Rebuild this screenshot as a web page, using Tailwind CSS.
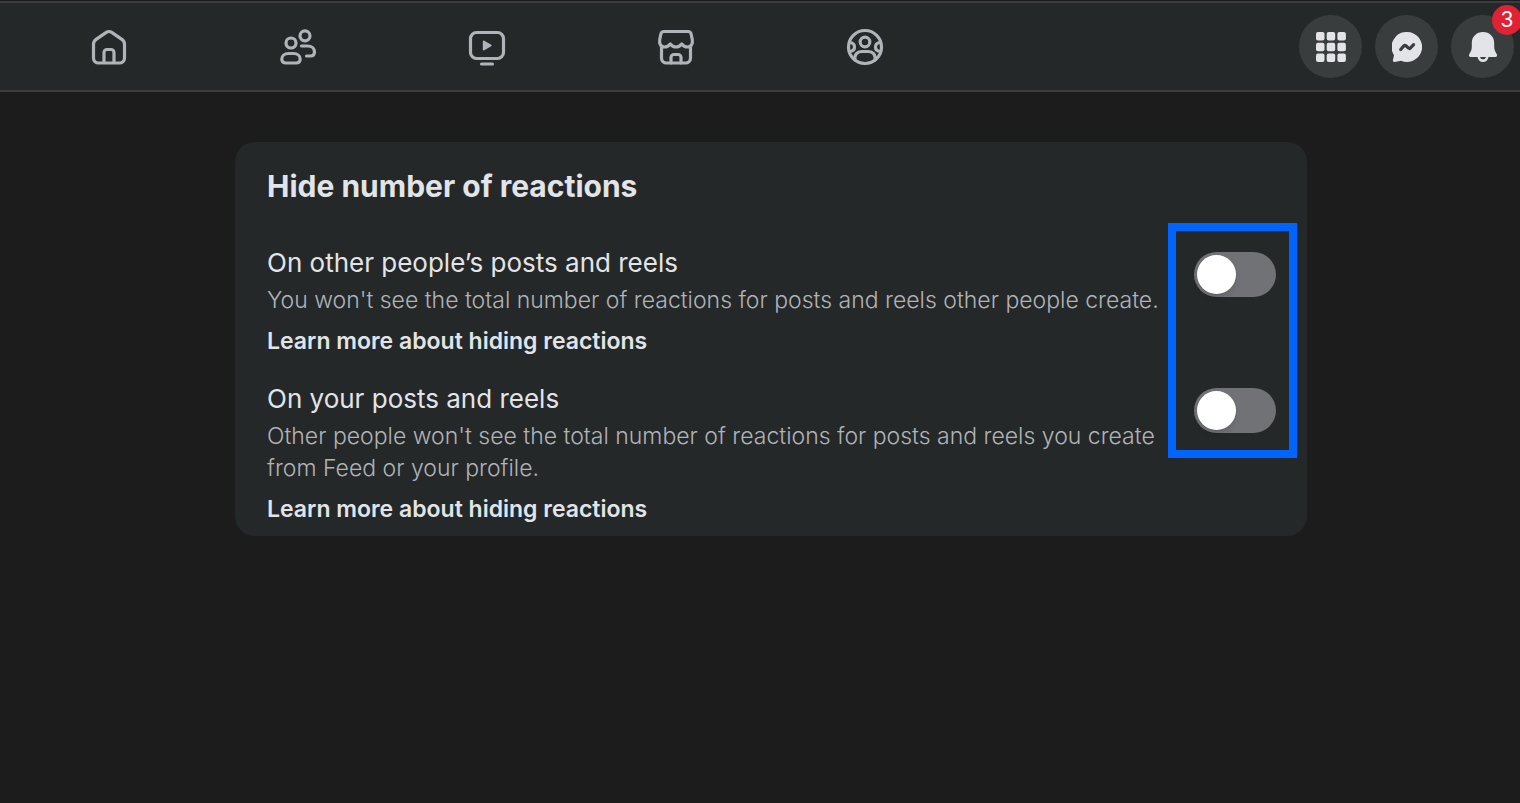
<!DOCTYPE html>
<html lang="en">
<head>
    <meta charset="UTF-8">
    <meta name="viewport" content="width=device-width, initial-scale=1.0">
    <title>Reaction preferences</title>
    <script src="https://cdn.jsdelivr.net/npm/@tailwindcss/browser@4"></script>
</head>
<body class="min-h-screen bg-[#1c1c1d] font-['Inter','Liberation_Sans',sans-serif] text-[#e2e4e7]">
    <!-- Top bar -->
    <header class="mt-px flex items-center justify-between border-t-2 border-b-2 border-t-[#3a3c3d] border-b-[#3a3c3d] bg-[#242829] h-[91px] pl-[15px] pr-[6px]">
        <nav class="grid w-[63%] grid-cols-5 text-[#b0b3b8]">
            <a href="#" aria-label="Home" class="flex justify-center">
                <svg class="h-10 w-10" viewBox="0 0 40 40" fill="none" stroke="currentColor" stroke-width="3.2" stroke-linejoin="round">
                    <path d="M4.5 17.2c0-2.1.9-3.6 2.6-4.8L17.300 5.400c1.800-1.200 3.600-1.200 5.400 0l10.200 7c1.700 1.200 2.600 2.700 2.600 4.800V31a5 5 0 0 1-5 5h-21a5 5 0 0 1-5-5z"/>
                    <path d="M15 36V25.500a3 3 0 0 1 3-3h4a3 3 0 0 1 3 3V36"/>
                </svg>
            </a>
            <a href="#" aria-label="Friends" class="flex justify-center">
                <svg class="h-10 w-10" viewBox="0 0 40 40" fill="none" stroke="currentColor" stroke-width="3.2" stroke-linecap="round">
                    <circle cx="13" cy="16" r="5"/>
                    <circle cx="27" cy="8.800" r="5"/>
                    <path d="M10.500 26.500h5c4 0 6.700 2.500 6.700 5.500 0 2.700-1.400 4-4.200 4H8c-2.800 0-4.200-1.300-4.200-4 0-3 2.700-5.500 6.700-5.500z"/>
                    <path d="M23.500 19h6c4.200 0 7 2.700 7 6 0 2.700-1.400 4-4.200 4h-3.800"/>
                </svg>
            </a>
            <a href="#" aria-label="Video" class="flex justify-center">
                <svg class="h-10 w-10" viewBox="0 0 40 40" fill="none" stroke="currentColor" stroke-width="3.2" stroke-linecap="round" stroke-linejoin="round">
                    <rect x="3.500" y="5.500" width="33" height="26" rx="6"/>
                    <path d="M16.800 14.600v7.800l6.900-3.900z" fill="currentColor" stroke-width="2"/>
                    <path d="M14.500 37h11"/>
                </svg>
            </a>
            <a href="#" aria-label="Marketplace" class="flex justify-center">
                <svg class="h-10 w-10" viewBox="0 0 40 40" fill="none" stroke="currentColor" stroke-width="3.2" stroke-linecap="round" stroke-linejoin="round">
                    <path d="M8 4.500h24c1.500 0 2.500.7 3 2l1.200 5.500c1 5-1.200 8-4.700 8-2.500 0-4.300-1-5.800-3-1.500 2-3.200 3-5.700 3s-4.200-1-5.700-3c-1.500 2-3.300 3-5.800 3-3.500 0-5.700-3-4.700-8L5 6.500c.5-1.300 1.500-2 3-2z"/>
                    <path d="M5.500 19v12a5 5 0 0 0 5 5h19a5 5 0 0 0 5-5V19"/>
                    <path d="M15 36v-5.500a3 3 0 0 1 3-3h4a3 3 0 0 1 3 3V36"/>
                </svg>
            </a>
            <a href="#" aria-label="Groups" class="flex justify-center">
                <svg class="h-10 w-10" viewBox="0 0 40 40" fill="none" stroke="currentColor" stroke-width="3.2" stroke-linecap="round" stroke-linejoin="round">
                    <circle cx="20" cy="20" r="16.500"/>
                    <circle cx="20" cy="15" r="4.800"/>
                    <path d="M10 33c-.8-5.500 2.200-8.500 6.500-8.500h7c4.300 0 7.300 3 6.500 8.500"/>
                    <path d="M4.500 15.500c3 .2 5 2 5 4.500s-2 4.300-5 4.500M35.500 15.500c-3 .2-5 2-5 4.500s2 4.300 5 4.500"/>
                </svg>
            </a>
        </nav>

        <div class="flex gap-[13px]">
            <button type="button" aria-label="Menu" class="flex h-[63px] w-[63px] items-center justify-center rounded-full bg-[#3a3d3e]">
                <svg class="h-[30px] w-[30px]" viewBox="0 0 30 30" fill="currentColor">
                    <rect x="0" y="0" width="8.500" height="8.500" rx="2"/>
                    <rect x="10.700" y="0" width="8.500" height="8.500" rx="2"/>
                    <rect x="21.400" y="0" width="8.500" height="8.500" rx="2"/>
                    <rect x="0" y="10.700" width="8.500" height="8.500" rx="2"/>
                    <rect x="10.700" y="10.700" width="8.500" height="8.500" rx="2"/>
                    <rect x="21.400" y="10.700" width="8.500" height="8.500" rx="2"/>
                    <rect x="0" y="21.400" width="8.500" height="8.500" rx="2"/>
                    <rect x="10.700" y="21.400" width="8.500" height="8.500" rx="2"/>
                    <rect x="21.400" y="21.400" width="8.500" height="8.500" rx="2"/>
                </svg>
            </button>
            <button type="button" aria-label="Messenger" class="flex h-[63px] w-[63px] items-center justify-center rounded-full bg-[#3a3d3e]">
                <svg class="h-[30px] w-[30px]" viewBox="0 0 30 30">
                    <path d="M15 0a15 15 0 1 1-6 28.700l-6.300 1.200c-1.400.2-2.200-.8-1.700-2.100l1-4.600A15 15 0 0 1 15 0z" fill="currentColor"/>
                    <path d="M8.700 17.500l3.100-3.600c.7-.7 1.400-.8 2.100-.2l2.600 2.400c.6.5 1.300.5 1.900-.1l3.200-3.400" fill="none" stroke="#3a3d3e" stroke-width="3.200" stroke-linecap="round"/>
                </svg>
            </button>
            <button type="button" aria-label="Notifications" class="relative flex h-[63px] w-[63px] items-center justify-center rounded-full bg-[#3a3d3e]">
                <svg class="h-[30px] w-[30px]" viewBox="0 0 30 30" fill="currentColor">
                    <path d="M15 0c6.500 0 11.200 4.700 11.200 11v3.500c0 2.500.5 4 1.500 5.800l1.200 2.200c.6 1.400-.1 2.500-1.600 2.500H2.700c-1.500 0-2.200-1.100-1.600-2.500l1.200-2.200c1-1.800 1.500-3.300 1.500-5.800V11C3.800 4.700 8.500 0 15 0z"/>
                    <path d="M9.500 25h11c-.5 3-2.700 5-5.500 5s-5-2-5.500-5z"/>
                    <path d="M12 25h6c-.4 1.500-1.500 2.300-3 2.300s-2.600-.8-3-2.300z" fill="#3a3d3e"/>
                </svg>
                <span class="absolute -top-[10px] -right-2 flex h-[30px] w-[30px] items-center justify-center rounded-full bg-[#e02235] text-[21px] text-white">3</span>
            </button>
        </div>
    </header>

    <!-- Settings card -->
    <main class="pt-[50px] pl-[22px]">
        <section class="mx-auto max-w-[1072px] rounded-[20px] bg-[#242829] pt-6 pr-[31px] pb-[11px] pl-8">
            <h1 class="text-[30px] leading-10 font-bold">Hide number of reactions</h1>

            <div class="relative mt-[39px] flex flex-col gap-6">
                <div class="flex items-start justify-between gap-4">
                    <div class="min-w-0 flex-1">
                        <label for="hide-others" class="block text-[26px] leading-9">On other people’s posts and reels</label>
                        <p class="mt-[3px] text-[23px] leading-8 font-light text-[#b0b3b7]">You won't see the total number of reactions for posts and reels other people create.</p>
                        <a href="#" class="mt-[9px] block text-[23px] leading-8 font-semibold">Learn more about hiding reactions</a>
                    </div>
                    <input type="checkbox" role="switch" id="hide-others" class="mt-[7px] h-[45px] w-[82px] shrink-0 cursor-pointer appearance-none rounded-full bg-[#717275] p-[3px] before:block before:h-[39px] before:w-[39px] before:rounded-full before:bg-white before:shadow-md before:content-[''] checked:bg-[#0866ff] checked:before:ml-auto">
                </div>

                <div class="flex items-start justify-between gap-4">
                    <div class="min-w-0 flex-1">
                        <label for="hide-own" class="block text-[26px] leading-9">On your posts and reels</label>
                        <p class="mt-[3px] text-[23px] leading-8 font-light text-[#b0b3b7]">Other people won't see the total number of reactions for posts and reels you create from Feed or your profile.</p>
                        <a href="#" class="mt-[9px] block text-[23px] leading-8 font-semibold">Learn more about hiding reactions</a>
                    </div>
                    <input type="checkbox" role="switch" id="hide-own" class="mt-[7px] h-[45px] w-[82px] shrink-0 cursor-pointer appearance-none rounded-full bg-[#717275] p-[3px] before:block before:h-[39px] before:w-[39px] before:rounded-full before:bg-white before:shadow-md before:content-[''] checked:bg-[#0866ff] checked:before:ml-auto">
                </div>

                <!-- Highlight around both switches -->
                <div class="pointer-events-none absolute -top-[22px] -right-[21px] h-[235px] w-[129px] border-8 border-[#0064ff]"></div>
            </div>
        </section>
    </main>
</body>
</html>
